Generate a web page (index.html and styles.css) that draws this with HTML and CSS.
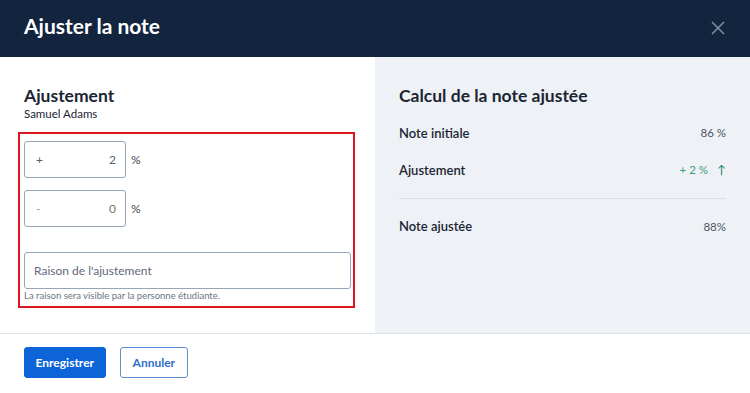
FILE: index.html
```html
<!DOCTYPE html>
<html lang="fr">
<head>
  <meta charset="UTF-8">
  <title>Ajuster la note</title>
  <link rel="stylesheet" href="styles.css">
</head>
<body>

<header class="modal-head">
  <h1>Ajuster la note</h1>
  <button class="close-btn" aria-label="Fermer">
    <svg width="14" height="14" viewBox="0 0 14 14"><path d="M1 1L13 13M13 1L1 13" stroke="#8796ab" stroke-width="1.4" fill="none"/></svg>
  </button>
</header>

<div class="modal-body">
  <!-- LEFT: adjustment form -->
  <div class="adjust-panel">
    <h2>Ajustement</h2>
    <div class="student">Samuel Adams</div>

    <div class="adjust-box">
      <div class="pct-row">
        <div class="pct-input"><span class="sign">+</span><span class="val">2</span></div>
        <span class="unit">%</span>
      </div>
      <div class="pct-row">
        <div class="pct-input muted"><span class="sign">-</span><span class="val">0</span></div>
        <span class="unit">%</span>
      </div>
      <input type="text" class="reason" placeholder="Raison de l'ajustement">
      <div class="hint">La raison sera visible par la personne étudiante.</div>
    </div>
  </div>

  <!-- RIGHT: summary -->
  <div class="calc-panel">
    <h2>Calcul de la note ajustée</h2>
    <div class="calc-row"><span class="label">Note initiale</span><span class="num">86 %</span></div>
    <div class="calc-row"><span class="label">Ajustement</span><span class="num up">+ 2 % <span class="arrow">↑</span></span></div>
    <div class="calc-row total"><span class="label">Note ajustée</span><span class="num">88%</span></div>
  </div>
</div>

<footer class="modal-foot">
  <button class="btn primary">Enregistrer</button>
  <button class="btn secondary">Annuler</button>
</footer>

</body>
</html>
```

FILE: styles.css
```css
body {
  margin: 0;
  font-family: "Source Sans Pro", "Lato", "Liberation Sans", sans-serif;
  color: #1b2534;
  background: #fff;
  width: 750px;
  height: 393px;
  overflow: hidden;
}
.modal-head {
  height: 57px;
  background: #12243e;
  display: flex;
  align-items: center;
  justify-content: space-between;
  padding: 0 24px;
  box-sizing: border-box;
}
.modal-head h1 {
  margin: 0;
  color: #fff;
  font-size: 21px;
  font-weight: 700;
  margin-top: -6px;
}
.close-btn {
  background: none;
  border: none;
  padding: 0;
  margin-right: 1px;
  margin-top: -2px;
  display: flex;
}
.modal-body {
  display: flex;
  height: 276px;
  border-bottom: 1px solid #dfe4eb;
}
.adjust-panel {
  width: 375px;
  padding: 28px 24px 0 24px;
  box-sizing: border-box;
}
.adjust-panel h2, .calc-panel h2 {
  margin: 0;
  font-size: 17.5px;
  font-weight: 700;
  color: #1b2534;
}
.student {
  font-size: 11.5px;
  margin-top: 1px;
}
.adjust-box {
  margin: 12px 0 0 -6px;
  width: 337px;
  height: 176px;
  box-sizing: border-box;
  border: 2px solid #e0141e;
  padding: 7px 2px 0 4px;
}
.pct-row {
  display: flex;
  align-items: center;
  margin-bottom: 12px;
}
.pct-input {
  width: 102px;
  height: 37px;
  box-sizing: border-box;
  border: 1px solid #97a5b8;
  border-radius: 3px;
  display: flex;
  align-items: center;
  justify-content: space-between;
  padding: 0 9px 0 11px;
  font-size: 12px;
  color: #555f6c;
}
.pct-input.muted .sign { color: #9ba4b0; }
.pct-input.muted .val { color: #7c7466; }
.unit {
  font-size: 12px;
  margin-left: 5px;
  color: #3c4552;
}
.reason {
  display: block;
  width: 327px;
  height: 37px;
  box-sizing: border-box;
  margin-top: 25px;
  border: 1px solid #97a5b8;
  border-radius: 3px;
  padding: 0 9px;
  font-family: inherit;
  font-size: 12px;
}
.reason::placeholder { color: #5f6977; }
.hint {
  font-size: 9.5px;
  color: #6b7584;
  margin-top: 1px;
}
.calc-panel {
  flex: 1;
  background: #eef1f6;
  padding: 28px 24px 0 24px;
}
.calc-row {
  display: flex;
  justify-content: space-between;
  align-items: center;
  height: 37px;
  font-size: 13px;
}
.calc-panel h2 + .calc-row { margin-top: 8px; }
.calc-row .label { font-weight: 600; color: #1b2534; }
.calc-row .num { font-size: 11.5px; color: #4d5663; }
.calc-row .num.up { color: #3aa17a; }
.calc-row .arrow { color: #1c7f55; margin-left: 6px; font-size: 12px; }
.calc-row.total {
  border-top: 1px solid #d8dde4;
  margin-top: 10px;
  height: 54px;
}
.modal-foot {
  display: flex;
  gap: 14px;
  padding: 13px 24px;
}
.btn {
  height: 31px;
  font-family: inherit;
  font-size: 12px;
  font-weight: 700;
  border-radius: 3px;
  cursor: pointer;
}
.btn.primary {
  padding: 0 10.5px;
  background: #0c64d8;
  color: #fff;
  border: 1px solid #0c64d8;
}
.btn.secondary {
  padding: 0 12px;
  background: #fff;
  color: #2e6fc7;
  border: 1px solid #5d8fd4;
}
```
